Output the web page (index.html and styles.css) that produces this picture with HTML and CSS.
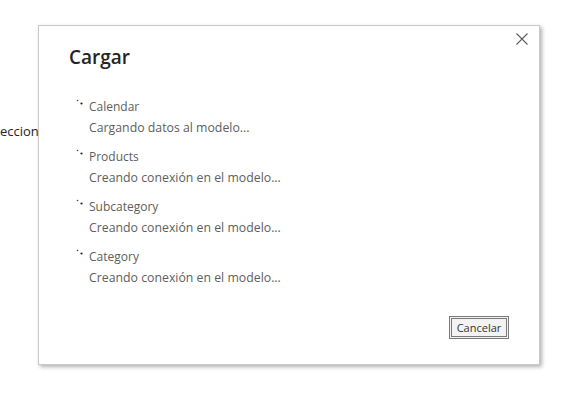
FILE: index.html
```html
<!DOCTYPE html>
<html>
<head>
    <title>Cargar</title>
    <meta name="viewport" content="width=device-width, initial-scale=1.0">
    <link rel="stylesheet" href="styles.css">
</head>
<body>
    <!-- Contenido detrás del diálogo -->
    <div class="page">
        <p class="page-text">eccionar tablas</p>
    </div>

    <!-- Diálogo Cargar -->
    <div class="dialog">
        <button class="close" aria-label="Cerrar">
            <svg width="12" height="12" viewBox="0 0 12 12">
                <path d="M0.5 0.5 L11.5 11.5 M11.5 0.5 L0.5 11.5" stroke="#605e5c" stroke-width="1.1" fill="none"/>
            </svg>
        </button>
        <h1 class="title">Cargar</h1>

        <ul class="load-list">
            <li class="load-item">
                <div class="item-name">
                    <svg class="spinner" width="8" height="8" viewBox="0 0 8 8">
                        <circle cx="1.5" cy="1.5" r="0.8" fill="#444"/>
                        <circle cx="5.5" cy="4.5" r="1.1" fill="#222"/>
                    </svg>
                    Calendar
                </div>
                <div class="item-status">Cargando datos al modelo...</div>
            </li>
            <li class="load-item">
                <div class="item-name">
                    <svg class="spinner" width="8" height="8" viewBox="0 0 8 8">
                        <circle cx="1.5" cy="1.5" r="0.8" fill="#444"/>
                        <circle cx="5.5" cy="4.5" r="1.1" fill="#222"/>
                    </svg>
                    Products
                </div>
                <div class="item-status">Creando conexión en el modelo...</div>
            </li>
            <li class="load-item">
                <div class="item-name">
                    <svg class="spinner" width="8" height="8" viewBox="0 0 8 8">
                        <circle cx="1.5" cy="1.5" r="0.8" fill="#444"/>
                        <circle cx="5.5" cy="4.5" r="1.1" fill="#222"/>
                    </svg>
                    Subcategory
                </div>
                <div class="item-status">Creando conexión en el modelo...</div>
            </li>
            <li class="load-item">
                <div class="item-name">
                    <svg class="spinner" width="8" height="8" viewBox="0 0 8 8">
                        <circle cx="1.5" cy="1.5" r="0.8" fill="#444"/>
                        <circle cx="5.5" cy="4.5" r="1.1" fill="#222"/>
                    </svg>
                    Category
                </div>
                <div class="item-status">Creando conexión en el modelo...</div>
            </li>
        </ul>

        <div class="footer">
            <button class="btn-cancel">Cancelar</button>
        </div>
    </div>
</body>
</html>
```

FILE: styles.css
```css
body {
    font-family: "Open Sans", "Noto Sans", Arial, sans-serif;
    margin: 0;
    padding: 0;
    background-color: #fff;
    color: #252423;
}

.page {
    padding-top: 121px;
}

.page-text {
    margin: 0;
    font-size: 13px;
    line-height: 20px;
    color: #252423;
}

.dialog {
    position: absolute;
    left: 38px;
    top: 25px;
    width: 502px;
    height: 340px;
    box-sizing: border-box;
    border: 1px solid #c8c8c8;
    background-color: #fff;
    box-shadow: 2px 2px 4px rgba(0, 0, 0, 0.3);
    display: flex;
    flex-direction: column;
    padding: 17px 30px 25px 30px;
}

.close {
    position: absolute;
    top: 7px;
    right: 11px;
    width: 12px;
    height: 12px;
    padding: 0;
    border: none;
    background: none;
    display: flex;
}

.title {
    margin: 0;
    font-size: 19px;
    line-height: 28px;
    font-weight: 600;
    color: #252423;
}

.load-list {
    list-style: none;
    margin: 25px 0 0 7px;
    padding: 0;
    display: flex;
    flex-direction: column;
    gap: 8px;
}

.item-name {
    display: flex;
    align-items: flex-start;
    font-size: 12px;
    line-height: 21px;
    color: #605e5c;
}

.spinner {
    margin-top: 3px;
    margin-right: 5px;
}

.item-status {
    padding-left: 13px;
    font-size: 12.3px;
    line-height: 21px;
    color: #605e5c;
}

.footer {
    margin-top: auto;
    display: flex;
    justify-content: flex-end;
}

.btn-cancel {
    width: 60px;
    height: 23px;
    padding: 0;
    border: 3px double #7a7a7a;
    background-color: #f3f3f3;
    font-family: "Open Sans", "Noto Sans", Arial, sans-serif;
    font-size: 11px;
    color: #333;
    cursor: pointer;
}
```
